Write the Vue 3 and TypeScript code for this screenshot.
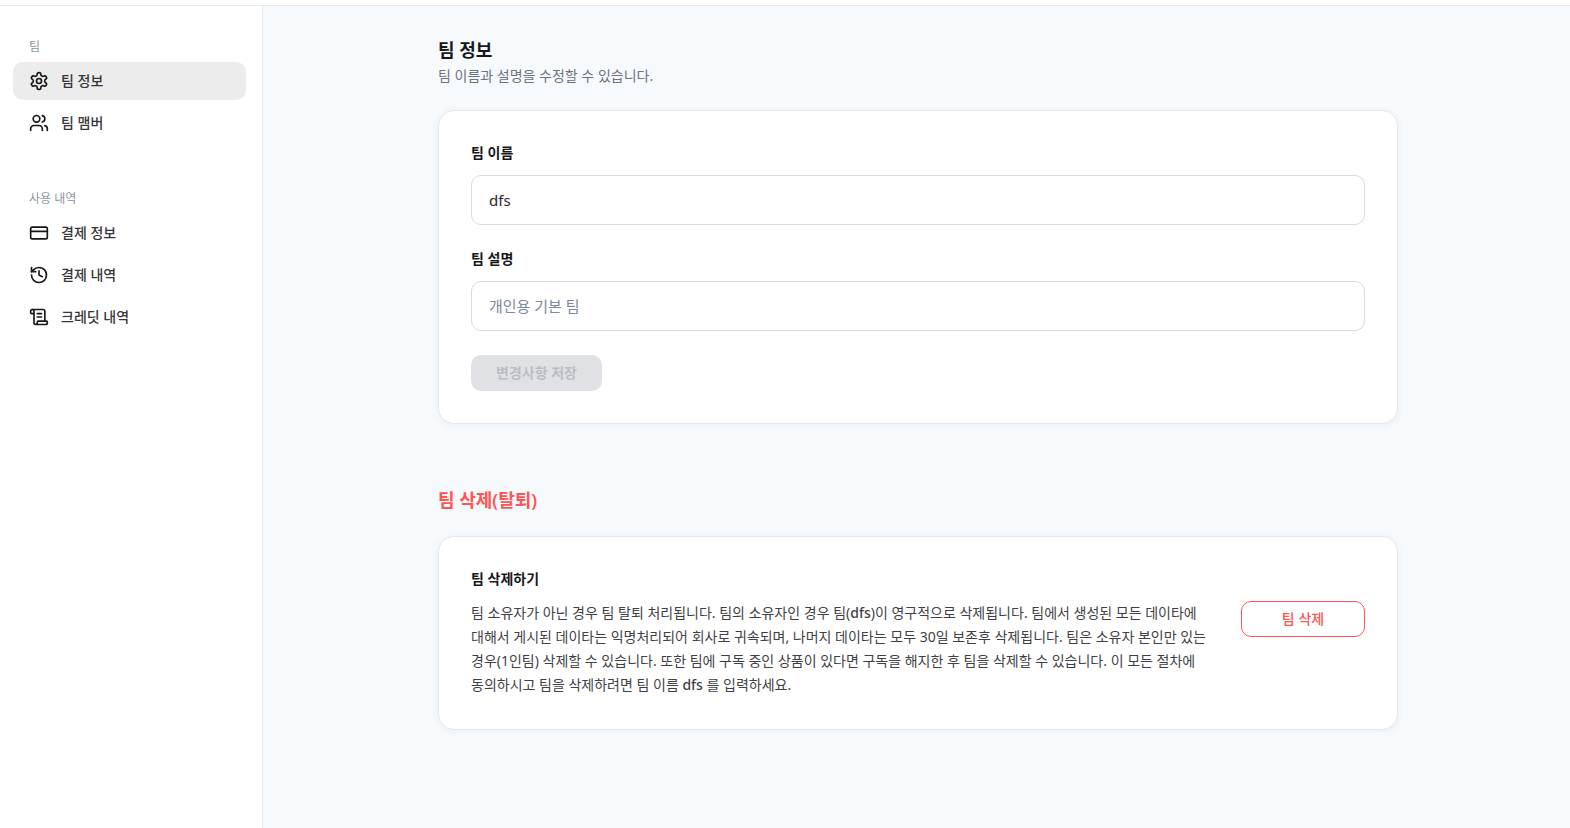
<script setup lang="ts">
import { ref, computed } from 'vue'

interface NavItem {
  label: string
  icon: string[]
  active?: boolean
}

interface NavGroup {
  title: string
  items: NavItem[]
}

const groups: NavGroup[] = [
  {
    title: '팀',
    items: [
      {
        label: '팀 정보',
        active: true,
        icon: [
          'M12.22 2h-.44a2 2 0 0 0-2 2v.18a2 2 0 0 1-1 1.73l-.43.25a2 2 0 0 1-2 0l-.15-.08a2 2 0 0 0-2.73.73l-.22.38a2 2 0 0 0 .73 2.73l.15.1a2 2 0 0 1 1 1.72v.51a2 2 0 0 1-1 1.74l-.15.09a2 2 0 0 0-.73 2.73l.22.38a2 2 0 0 0 2.73.73l.15-.08a2 2 0 0 1 2 0l.43.25a2 2 0 0 1 1 1.73V20a2 2 0 0 0 2 2h.44a2 2 0 0 0 2-2v-.18a2 2 0 0 1 1-1.73l.43-.25a2 2 0 0 1 2 0l.15.08a2 2 0 0 0 2.73-.73l.22-.39a2 2 0 0 0-.73-2.73l-.15-.08a2 2 0 0 1-1-1.74v-.5a2 2 0 0 1 1-1.74l.15-.09a2 2 0 0 0 .73-2.73l-.22-.38a2 2 0 0 0-2.73-.73l-.15.08a2 2 0 0 1-2 0l-.43-.25a2 2 0 0 1-1-1.73V4a2 2 0 0 0-2-2z',
          'M15 12a3 3 0 1 1-6 0a3 3 0 1 1 6 0',
        ],
      },
      {
        label: '팀 맴버',
        icon: [
          'M16 21v-2a4 4 0 0 0-4-4H6a4 4 0 0 0-4 4v2',
          'M13 7a4 4 0 1 1-8 0a4 4 0 1 1 8 0',
          'M22 21v-2a4 4 0 0 0-3-3.87',
          'M16 3.13a4 4 0 0 1 0 7.75',
        ],
      },
    ],
  },
  {
    title: '사용 내역',
    items: [
      {
        label: '결제 정보',
        icon: [
          'M4 5h16a2 2 0 0 1 2 2v10a2 2 0 0 1-2 2H4a2 2 0 0 1-2-2V7a2 2 0 0 1 2-2z',
          'M2 10h20',
        ],
      },
      {
        label: '결제 내역',
        icon: ['M3 12a9 9 0 1 0 9-9 9.75 9.75 0 0 0-6.74 2.74L3 8', 'M3 3v5h5', 'M12 7v5l4 2'],
      },
      {
        label: '크레딧 내역',
        icon: [
          'M15 12h-5',
          'M15 8h-5',
          'M19 17V5a2 2 0 0 0-2-2H4',
          'M8 21h12a2 2 0 0 0 2-2v-1a1 1 0 0 0-1-1H11a1 1 0 0 0-1 1v1a2 2 0 1 1-4 0V5a2 2 0 1 0-4 0v2a1 1 0 0 0 1 1h3',
        ],
      },
    ],
  },
]

const savedName = 'dfs'
const teamName = ref(savedName)
const teamDescription = ref('')
const unchanged = computed(() => teamName.value === savedName && teamDescription.value === '')
</script>

<template>
  <div class="page">
    <header class="topbar"></header>
    <div class="body">
      <nav class="sidebar">
        <section v-for="group in groups" :key="group.title" class="group">
          <h2 class="group-title">{{ group.title }}</h2>
          <ul class="group-list">
            <li v-for="item in group.items" :key="item.label">
              <a href="#" class="nav-link" :class="{ active: item.active }">
                <svg class="icon" viewBox="0 0 24 24" aria-hidden="true">
                  <path v-for="d in item.icon" :key="d" :d="d" />
                </svg>
                <span>{{ item.label }}</span>
              </a>
            </li>
          </ul>
        </section>
      </nav>

      <main class="main">
        <div class="content">
          <section>
            <h1 class="heading">팀 정보</h1>
            <p class="subheading">팀 이름과 설명을 수정할 수 있습니다.</p>
            <form class="card form" @submit.prevent>
              <div class="field">
                <label for="team-name">팀 이름</label>
                <input id="team-name" v-model="teamName" type="text" />
              </div>
              <div class="field">
                <label for="team-description">팀 설명</label>
                <input id="team-description" v-model="teamDescription" type="text" placeholder="개인용 기본 팀" />
              </div>
              <button type="submit" class="save" :disabled="unchanged">변경사항 저장</button>
            </form>
          </section>

          <section class="danger">
            <h2 class="heading red">팀 삭제(탈퇴)</h2>
            <div class="card delete">
              <div class="delete-text">
                <h3>팀 삭제하기</h3>
                <p>
                  팀 소유자가 아닌 경우 팀 탈퇴 처리됩니다. 팀의 소유자인 경우 팀(<b>{{ savedName }}</b>)이 영구적으로
                  삭제됩니다. 팀에서 생성된 모든 데이타에 대해서 게시된 데이타는 익명처리되어 회사로 귀속되며, 나머지
                  데이타는 모두 30일 보존후 삭제됩니다. 팀은 소유자 본인만 있는 경우(1인팀) 삭제할 수 있습니다. 또한 팀에
                  구독 중인 상품이 있다면 구독을 해지한 후 팀을 삭제할 수 있습니다. 이 모든 절차에 동의하시고 팀을
                  삭제하려면 팀 이름 <b>{{ savedName }}</b> 를 입력하세요.
                </p>
              </div>
              <button type="button" class="remove">팀 삭제</button>
            </div>
          </section>
        </div>
      </main>
    </div>
  </div>
</template>

<style>
body {
  margin: 0;
}
</style>

<style scoped>
.page {
  display: flex;
  flex-direction: column;
  min-height: 100vh;
  background: #fff;
  color: #18181b;
  font-family: 'Noto Sans', 'Noto Sans CJK KR', sans-serif;
  font-size: 14px;
  line-height: 20px;
  word-break: keep-all;
}

.page * {
  box-sizing: border-box;
}

h1,
h2,
h3,
p,
ul {
  margin: 0;
  padding: 0;
}

.topbar {
  flex: 0 0 6px;
  border-bottom: 1px solid #e5e7eb;
}

.body {
  display: flex;
  flex: 1;
}

.sidebar {
  display: flex;
  flex-direction: column;
  gap: 48px;
  flex: 0 0 263px;
  padding: 32px 16px 32px 13px;
  border-right: 1px solid #e5e7eb;
}

.group-title {
  padding: 0 16px;
  margin-bottom: 6px;
  font-size: 12px;
  line-height: 18px;
  font-weight: 400;
  color: #8b95a1;
}

.group-list {
  display: flex;
  flex-direction: column;
  gap: 4px;
  list-style: none;
}

.nav-link {
  display: flex;
  align-items: center;
  gap: 12px;
  height: 38px;
  padding: 0 16px;
  border-radius: 10px;
  color: #36363b;
  font-weight: 500;
  text-decoration: none;
}

.nav-link.active {
  background: #ececec;
}

.icon {
  width: 20px;
  height: 20px;
  fill: none;
  stroke: #18181b;
  stroke-width: 2;
  stroke-linecap: round;
  stroke-linejoin: round;
}

.main {
  flex: 1;
  padding: 30px 32px 48px 35px;
  background: #f6fafd;
}

.content {
  display: flex;
  flex-direction: column;
  gap: 62px;
  max-width: 960px;
  margin: 0 auto;
}

.heading {
  font-size: 18px;
  line-height: 28px;
  font-weight: 600;
}

.heading.red {
  color: #ff5454;
}

.subheading {
  margin-bottom: 22px;
  line-height: 24px;
  color: #6b7280;
}

.card {
  padding: 32px;
  background: #fff;
  border: 1px solid #e7e8ea;
  border-radius: 16px;
  box-shadow: 0 1px 8px rgba(0, 0, 0, 0.05);
}

.form {
  display: flex;
  flex-direction: column;
  align-items: flex-start;
  gap: 24px;
}

.field {
  display: flex;
  flex-direction: column;
  gap: 12px;
  width: 100%;
}

.field label,
.delete-text h3 {
  font-size: 14px;
  line-height: 20px;
  font-weight: 600;
}

.field input {
  width: 100%;
  height: 50px;
  padding: 0 17px;
  border: 1px solid #dadbdf;
  border-radius: 10px;
  background: #fff;
  color: #27272a;
  font: inherit;
  font-size: 15px;
}

.field input::placeholder {
  color: #7c879c;
  opacity: 1;
}

.save,
.remove {
  height: 36px;
  border-radius: 10px;
  font: inherit;
}

.save {
  padding: 0 25px;
  border: 0;
  background: #e0e1e5;
  color: #bbbdc4;
  font-weight: 600;
}

.danger .card {
  margin-top: 22px;
}

.delete {
  display: flex;
  align-items: flex-start;
  gap: 32px;
}

.delete-text {
  flex: 1;
}

.delete-text p {
  margin-top: 12px;
  line-height: 24px;
  color: #3f3f46;
}

.delete-text b {
  font-weight: 500;
}

.remove {
  flex: 0 0 124px;
  margin-top: 32px;
  border: 1px solid #ff5454;
  background: #fff;
  color: #ff5454;
  font-weight: 500;
}
</style>
